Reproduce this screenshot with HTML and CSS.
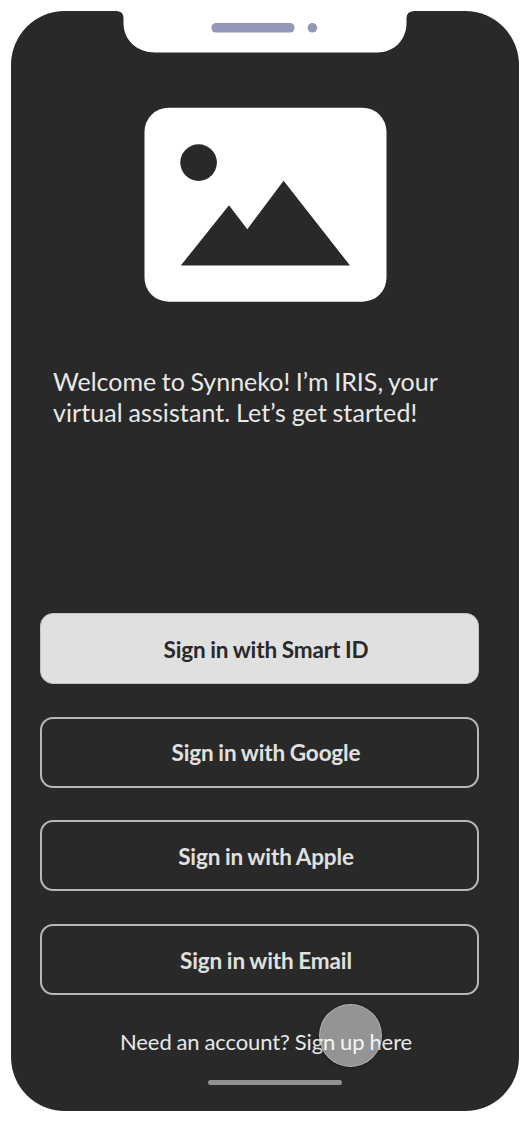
FILE: index.html
```html
<!DOCTYPE html>
<html lang="en">
<head>
<meta charset="utf-8">
<title>Synneko</title>
<link rel="stylesheet" href="styles.css">
</head>
<body>
<main class="phone">
  <header class="status">
    <svg class="notch" width="300" height="42" viewBox="0 0 300 42" aria-hidden="true">
      <path class="notch-shape" d="M0 0H2Q8.500 .5 8.500 7V12C8.500 29 22 41.500 40 41.500H262C279 41.500 291.500 29 291.500 12V7Q291.500 .5 299 0Z"/>
      <rect class="sensor" x="96.500" y="12" width="83" height="9.500" rx="4.500"/>
      <circle class="sensor" cx="197.400" cy="16.800" r="4.800"/>
    </svg>
  </header>
  <svg class="picture" width="243" height="195" viewBox="0 0 243 195" aria-hidden="true">
    <rect class="picture-card" x=".5" y=".7" width="242" height="194" rx="24"/>
    <circle class="picture-ink" cx="54.600" cy="55.600" r="18.300"/>
    <path class="picture-ink" d="M36.800 158.500 85 98.200 103.300 122.200 139.600 73.800 206 158.500Z"/>
  </svg>
  <p class="welcome"><span class="line">Welcome to Synneko! I’m IRIS, your</span> <span class="line line-loose">virtual assistant. Let’s get started!</span></p>
  <div class="actions">
    <button class="button button-primary">Sign in with Smart ID</button>
    <button class="button">Sign in with Google</button>
    <button class="button">Sign in with Apple</button>
    <button class="button">Sign in with Email</button>
  </div>
  <p class="signup">Need an account? Sign up here<span class="touch"></span></p>
  <div class="home-bar"></div>
</main>
</body>
</html>
```
FILE: styles.css
```css
body {
  margin: 0;
  background: #fff;
  font-family: Lato, sans-serif;
}
.phone {
  box-sizing: border-box;
  width: 508px;
  height: 1100px;
  margin: 11px;
  border-radius: 54px;
  background: #292929;
  color: #e8e8e8;
  display: flex;
  flex-direction: column;
}
.status {
  height: 96px;
  padding-left: 104px;
}
.notch { display: block; }
.notch-shape { fill: #fff; }
.sensor { fill: #9496b8; }
.picture {
  display: block;
  flex: none;
  margin-left: 133px;
}
.picture-card { fill: #fff; }
.picture-ink { fill: #292929; }
.welcome {
  margin: 64px 0 0 42px;
  height: 62px;
  font-size: 25px;
  line-height: 31px;
}
.line {
  display: block;
  white-space: nowrap;
  word-spacing: -0.850px;
}
.line-loose { letter-spacing: 0.090px; }
.actions {
  display: flex;
  flex-direction: column;
  gap: 32.700px;
  margin: 185px 40px 0 29px;
}
.button {
  box-sizing: border-box;
  height: 71px;
  padding: 2px 0 0 13px;
  border: 2px solid #b8b8b8;
  border-radius: 13px;
  background: transparent;
  color: #e0e0e0;
  font: 700 22.500px/28px Lato, sans-serif;
  letter-spacing: -0.120px;
  word-spacing: -0.650px;
}
.button-primary {
  border: 1px solid #c4c4c4;
  background: #e0e0e0;
  color: #292929;
}
.signup {
  position: relative;
  width: fit-content;
  margin: 33px 0 0 109px;
  font-size: 22px;
  line-height: 28px;
  letter-spacing: -0.100px;
  word-spacing: -0.600px;
  white-space: nowrap;
}
.touch {
  position: absolute;
  left: 199px;
  top: -24px;
  box-sizing: border-box;
  width: 63px;
  height: 63px;
  border: 1.500px solid rgba(190, 190, 190, .7);
  border-radius: 50%;
  background: rgba(255, 255, 255, .5);
  box-shadow: 0 1px 5px rgba(0, 0, 0, .3);
}
.home-bar {
  width: 134px;
  height: 5px;
  margin: 24px 0 0 196.500px;
  border-radius: 3px;
  background: #929292;
}
```
